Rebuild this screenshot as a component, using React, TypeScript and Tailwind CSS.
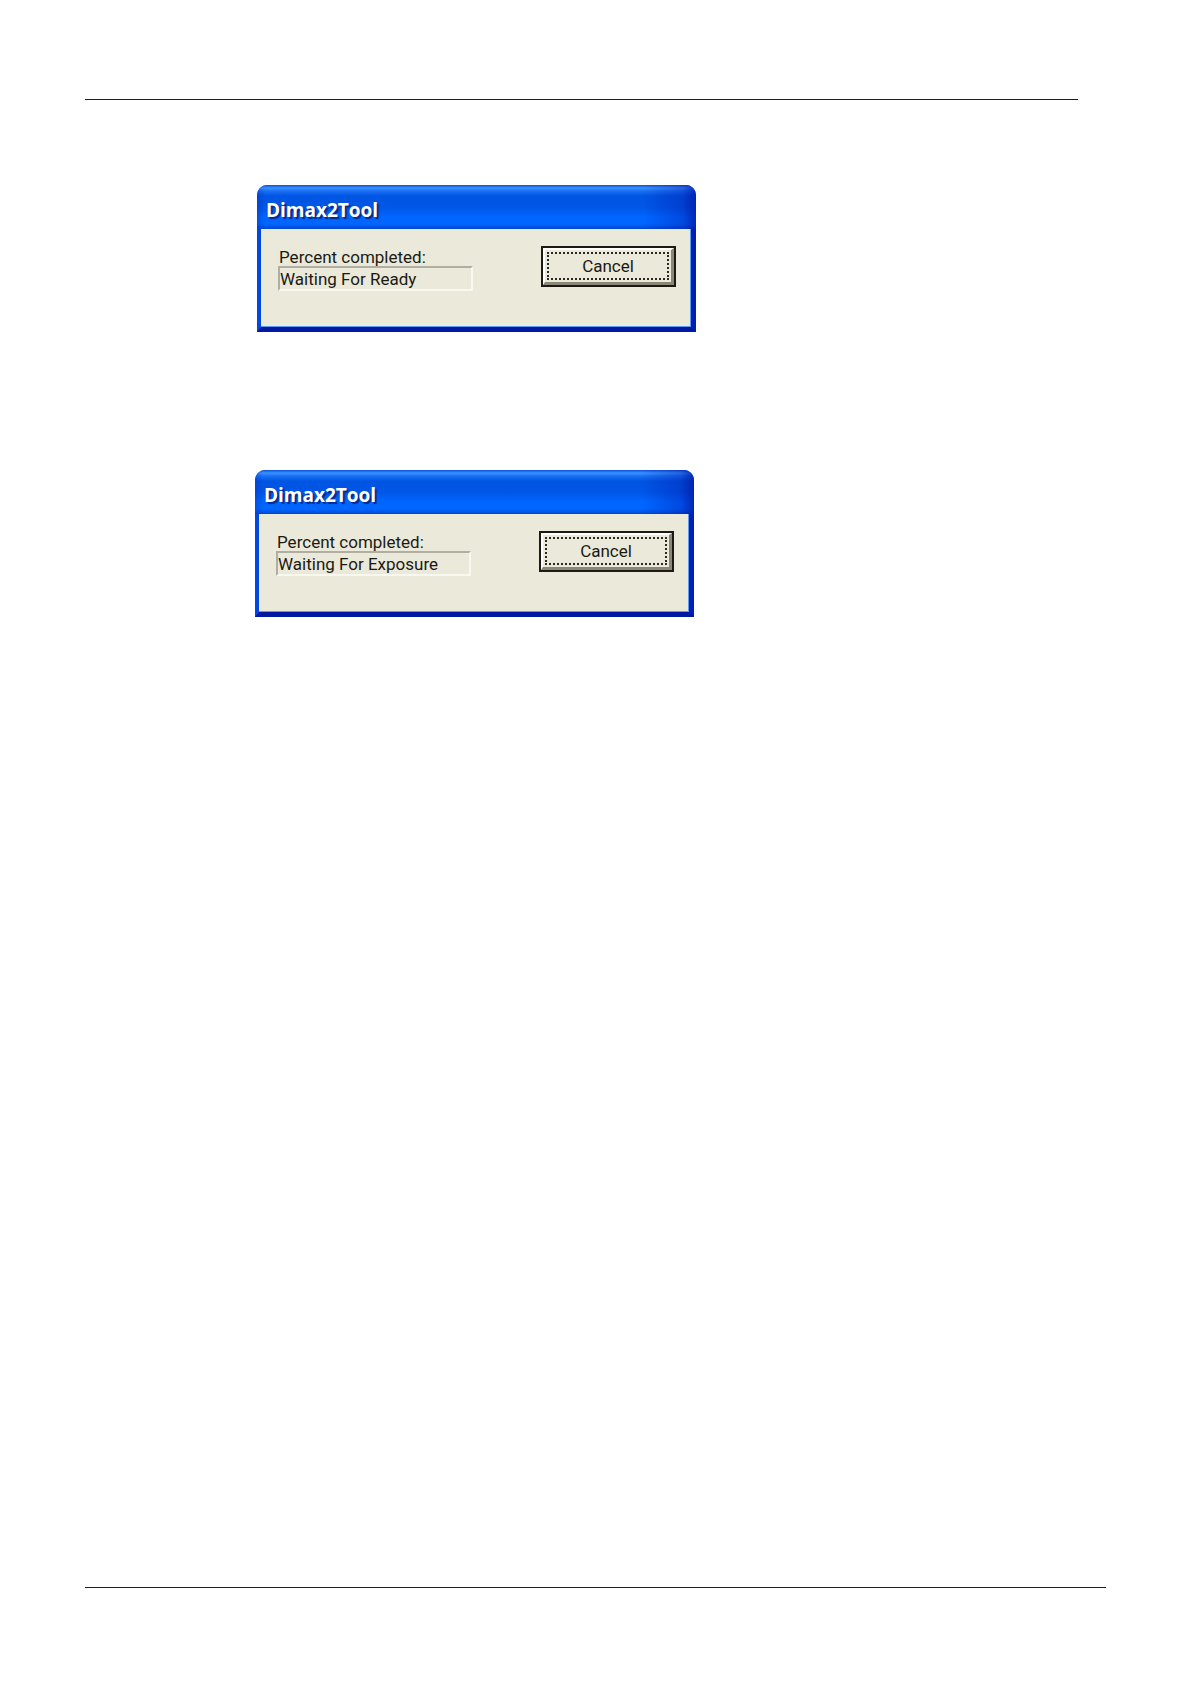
type ProgressWindowProps = {
  id: string
  title: string
  status: string
}

function ProgressWindow({ id, title, status }: ProgressWindowProps) {
  return (
    <section className="w-full max-w-[439px] overflow-hidden rounded-t-[10px] bg-[#0058f0]">
      <header className="flex h-11 items-center bg-[linear-gradient(to_right,rgba(0,40,190,0.35)_0,transparent_8px,transparent_88%,rgba(0,20,170,0.35)_97%,rgba(0,20,160,0.75)_100%),linear-gradient(to_bottom,#0a50d8_0,#3a93ff_3px,#1a70f4_6px,#0055e2_11px,#0056e6_22px,#0066ff_32px,#0066ff_39px,#0048d2_44px)] px-[9px] pt-[6px]">
        <h2 className="font-['Open_Sans',sans-serif] text-[19px] leading-6 font-bold text-white [text-shadow:2px_2px_1px_#0a2a8a]">
          {title}
        </h2>
      </header>

      <div className="border-r-5 border-b-5 border-l-4 border-r-[#001fb4] border-b-[#0019a0] border-l-[#0048e0]">
        <div className="flex min-h-[98px] items-start justify-between border-r border-b border-[#5c9cf4] bg-[#ebe9d9] pt-[17px] pr-[14px] pl-[17px]">
          <div className="flex w-[195px] flex-col pt-[2px]">
            <label htmlFor={id} className="pl-px text-[17px] leading-[18px]">
              Percent completed:
            </label>
            <input
              id={id}
              type="text"
              readOnly
              value={status}
              className="h-[25px] w-full border-2 border-t-[#b0aea0] border-r-[#f8f7f0] border-b-[#f8f7f0] border-l-[#b0aea0] bg-transparent text-[17px] leading-5 outline-none"
            />
          </div>

          <button
            type="button"
            className="h-[41px] w-[135px] border-2 border-[#1c1a12] bg-[#ebe9d9] text-[17px]"
          >
            <span className="block h-full border-t-2 border-r-3 border-b-3 border-l-2 border-t-white border-r-[#8a8777] border-b-[#8a8777] border-l-white p-[2px]">
              <span className="flex h-full items-center justify-center border-2 border-dotted border-[#2a2820] leading-5">
                Cancel
              </span>
            </span>
          </button>
        </div>
      </div>
    </section>
  )
}

export default function App() {
  return (
    <div className="flex min-h-screen flex-col bg-white pt-[99px] pr-[84px] pb-24 pl-[85px] font-['Roboto','Liberation_Sans',sans-serif] text-[#1a1a14]">
      <hr className="mr-7 border-t border-[#1c1c1c]" />

      <main className="flex flex-col">
        <div className="pt-[85px] pl-[172px]">
          <ProgressWindow
            id="status-ready"
            title="Dimax2Tool"
            status="Waiting For Ready"
          />
        </div>
        <div className="pt-[138px] pl-[170px]">
          <ProgressWindow
            id="status-exposure"
            title="Dimax2Tool"
            status="Waiting For Exposure"
          />
        </div>
      </main>

      <hr className="mt-auto border-t border-[#1c1c1c]" />
    </div>
  )
}
